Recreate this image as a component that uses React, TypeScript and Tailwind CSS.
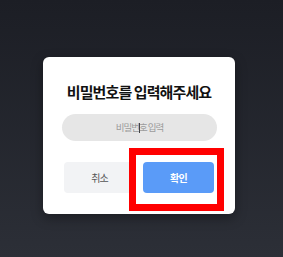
import React from "react";

export default function App() {
  return (
    <div className="relative w-[283px] h-[257px] overflow-hidden bg-gradient-to-b from-[#1c1e25] to-[#2c2f37] pt-[57px] pl-[43px] font-['Noto_Sans_CJK_KR','Noto_Sans',sans-serif]">
      <div className="w-[192px] h-[157px] bg-white rounded-[6px] shadow-[0_4px_12px_rgba(0,0,0,0.35)] flex flex-col items-center pt-[23px]">
        <div className="text-[15px] leading-[24px] font-bold text-[#111111] tracking-[-0.9px]">
          비밀번호를 입력해주세요
        </div>
        <div className="mt-[10px] ml-[1px] w-[155px] h-[27px] rounded-full bg-[#e6e6e6] flex items-center justify-center">
          <input
            readOnly
            placeholder="비밀번호 입력"
            className="w-full bg-transparent text-center text-[9.5px] text-[#333] placeholder:text-[#9c9c9c] outline-none tracking-[-1px]"
          />
        </div>
        <div className="mt-[21px] w-[150px] h-[31px] flex gap-[8px]">
          <button className="flex-1 rounded-[4px] bg-[#f2f3f5] text-[10px] text-[#555555] tracking-[-1px] flex items-center justify-center">
            취소
          </button>
          <button className="flex-1 rounded-[4px] bg-[#5a9bf8] text-[10px] font-bold text-white tracking-[-0.8px] flex items-center justify-center">
            확인
          </button>
        </div>
      </div>
      <div className="absolute left-[139px] top-[123px] w-[1px] h-[10px] bg-[#444]" />
      <div className="absolute left-[129px] top-[148px] w-[95px] h-[63px] border-[7px] border-[#ff0000]" />
    </div>
  );
}
